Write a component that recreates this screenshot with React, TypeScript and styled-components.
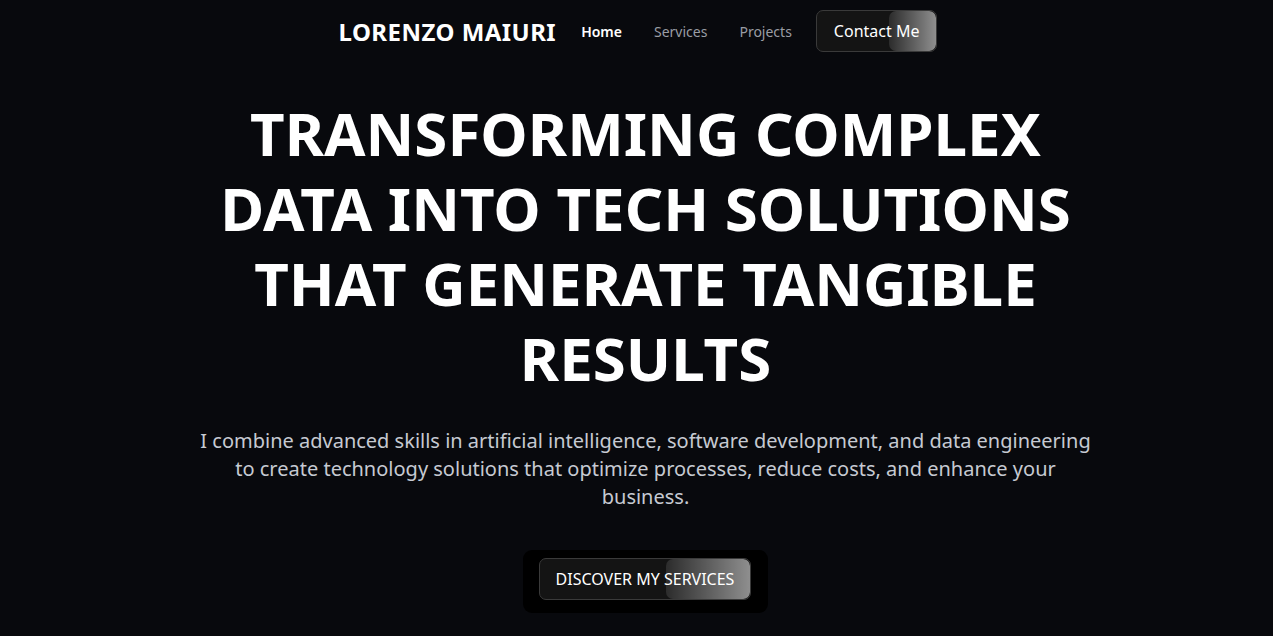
import React from "react";
import styled, { createGlobalStyle } from "styled-components";

const GlobalStyle = createGlobalStyle`
  html, body {
    margin: 0;
    padding: 0;
    background: #08090d;
    font-family: "Noto Sans", "Open Sans", sans-serif;
    color: #fff;
  }
`;

const Page = styled.div`
  min-height: 100vh;
  background: #08090d;
  display: flex;
  flex-direction: column;
  align-items: center;
`;

const Nav = styled.nav`
  display: flex;
  align-items: center;
  height: 62px;
  margin-left: 3px;
`;

const Logo = styled.div`
  font-size: 24px;
  font-weight: 700;
  letter-spacing: 0.45px;
  margin-right: 25px;
`;

const NavLink = styled.a<{ $active?: boolean }>`
  font-size: 14px;
  font-weight: ${(p) => (p.$active ? 600 : 400)};
  color: ${(p) => (p.$active ? "#fff" : "#9a9da4")};
  text-decoration: none;
  margin-right: 32px;
  cursor: pointer;

  &:nth-of-type(3) {
    margin-right: 24px;
  }
`;

const GlowButton = styled.button<{ $upper?: boolean }>`
  position: relative;
  overflow: hidden;
  font-family: inherit;
  font-size: 16px;
  color: #fff;
  background: #141414;
  border: 1px solid #3a3a3a;
  border-radius: 7px;
  padding: 0 ${(p) => (p.$upper ? "16px" : "17px")};
  height: 42px;
  cursor: pointer;
  text-transform: ${(p) => (p.$upper ? "uppercase" : "none")};

  &::after {
    content: "";
    position: absolute;
    top: 0;
    right: 0;
    bottom: 0;
    width: 40%;
    border-radius: 7px;
    background: linear-gradient(90deg, rgba(255, 255, 255, 0.1), rgba(255, 255, 255, 0.52));
  }

  span {
    position: relative;
    z-index: 1;
  }
`;

const Hero = styled.section`
  display: flex;
  flex-direction: column;
  align-items: center;
  text-align: center;
  width: 900px;
  padding-top: 34px;
  margin-left: 18px;
`;

const Title = styled.h1`
  margin: 0;
  font-size: 60px;
  font-weight: 700;
  line-height: 75px;
  text-transform: uppercase;
`;

const Lead = styled.p`
  margin: 31px 0 0;
  font-size: 20px;
  line-height: 28px;
  color: #c6cad2;
`;

const CtaFrame = styled.div`
  margin-top: 39px;
  background: #000;
  border-radius: 9px;
  padding: 8px 17px 13px 16px;
`;

export default function App() {
  return (
    <Page>
      <GlobalStyle />
      <Nav>
        <Logo>LORENZO MAIURI</Logo>
        <NavLink $active>Home</NavLink>
        <NavLink>Services</NavLink>
        <NavLink>Projects</NavLink>
        <GlowButton>
          <span>Contact Me</span>
        </GlowButton>
      </Nav>
      <Hero>
        <Title>
          Transforming complex data into tech solutions that generate tangible results
        </Title>
        <Lead>
          I combine advanced skills in artificial intelligence, software development, and data
          engineering to create technology solutions that optimize processes, reduce costs, and
          enhance your business.
        </Lead>
        <CtaFrame>
          <GlowButton $upper>
            <span>Discover my services</span>
          </GlowButton>
        </CtaFrame>
      </Hero>
    </Page>
  );
}
